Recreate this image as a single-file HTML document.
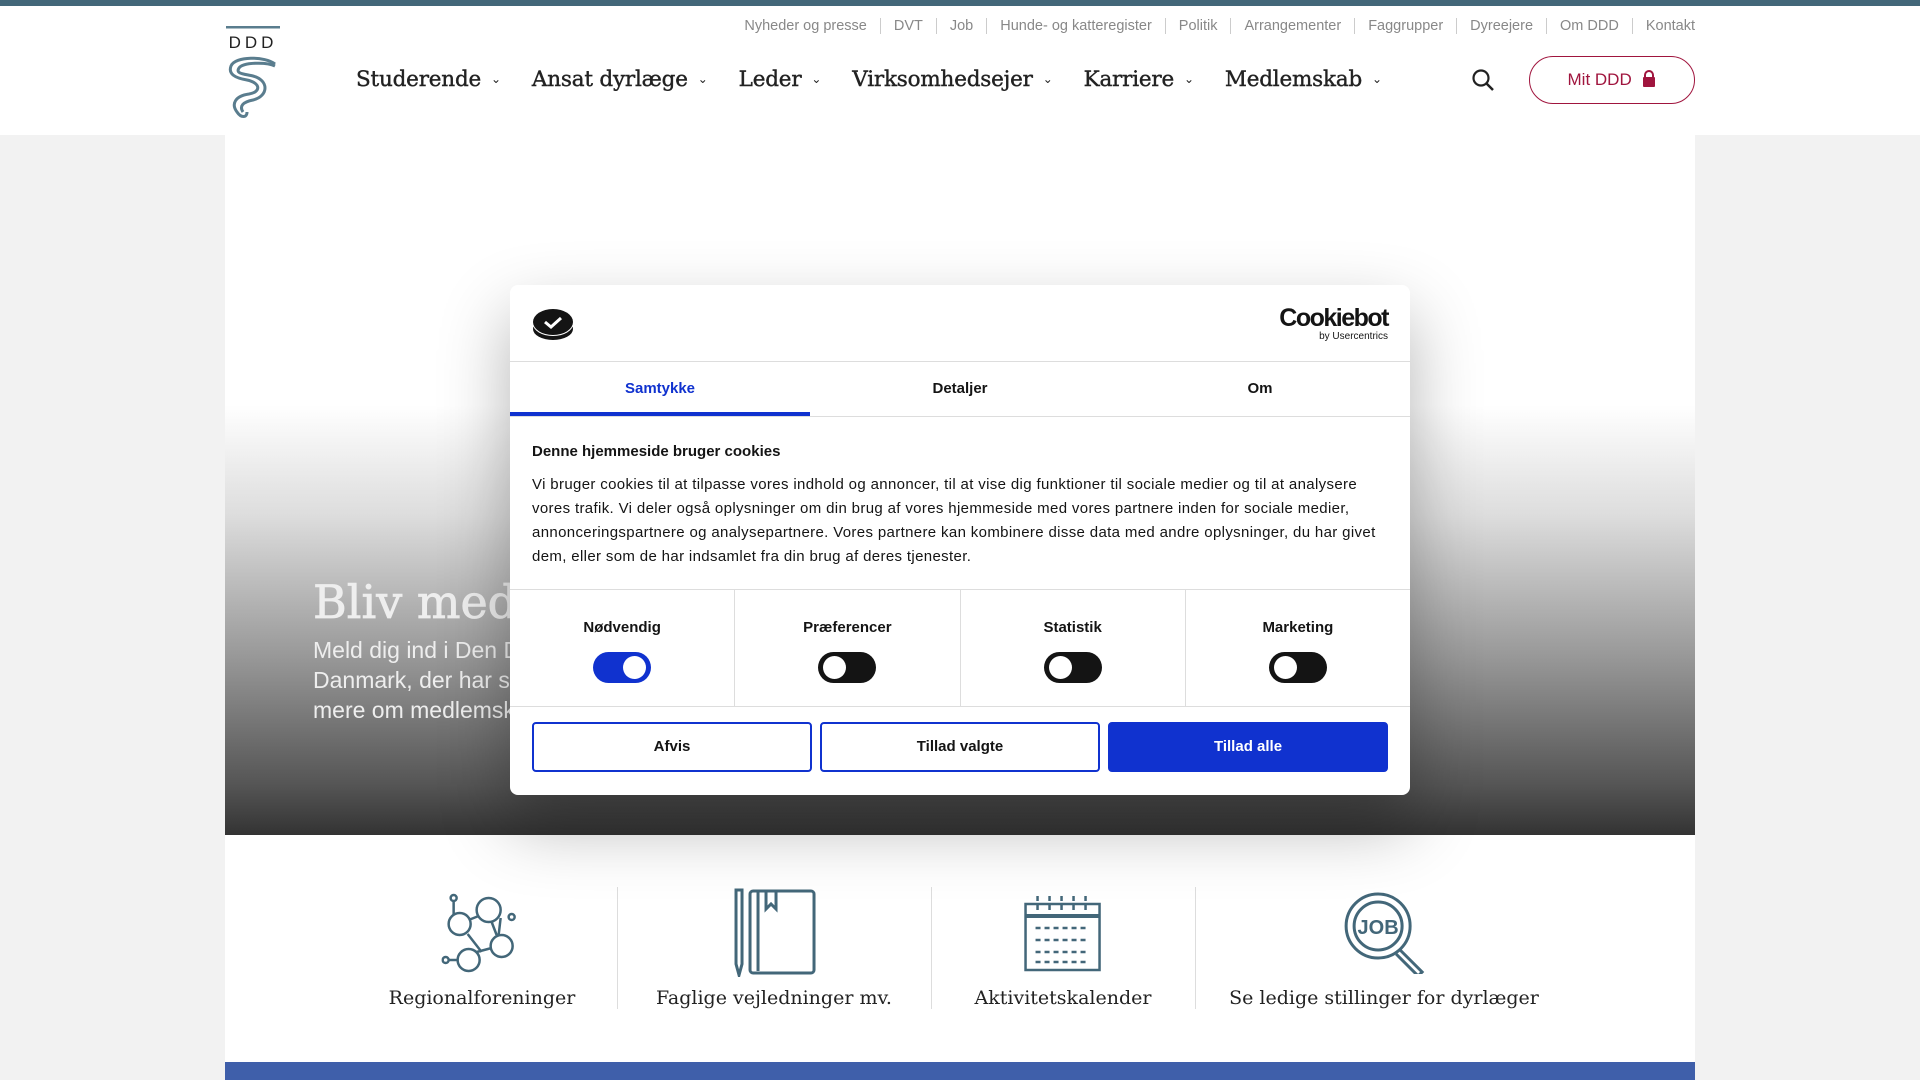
<!DOCTYPE html>
<html><head><meta charset="utf-8"><style>
*{box-sizing:border-box;margin:0;padding:0}
body{width:1920px;height:1080px;overflow:hidden;background:#f2f2f2;font-family:"Liberation Sans",sans-serif;position:relative}
.topbar{position:absolute;left:0;top:0;width:1920px;height:6px;background:#436779}
header{position:absolute;left:0;top:6px;width:1920px;height:129px;background:#fff}
.util{position:absolute;top:12px;right:225px;font-size:14.5px;color:#888;display:flex}
.util span{padding:0 13px;border-left:1px solid #ccc;line-height:16px}
.util span:first-child{border:none}
.util span:last-child{padding-right:0}
.nav{position:absolute;top:61px;left:356px;font-family:"DejaVu Serif",serif;font-size:21.5px;color:#222;display:flex;letter-spacing:-.2px}
.nav span{margin-right:31px;white-space:nowrap;-webkit-text-stroke:.4px #222}
.nav span i{font-style:normal;font-size:12px;margin-left:10px;vertical-align:3px;font-family:"DejaVu Sans";-webkit-text-stroke:0}
.btn{position:absolute;left:1529px;top:50px;width:166px;height:48px;border:1px solid #a0153e;border-radius:24px;color:#a0153e;font-size:17px;text-align:center;line-height:46px}
.hero{position:absolute;left:225px;top:135px;width:1470px;height:700px;background:linear-gradient(#fff 0,#fff 270px,#ddd 380px,#999 520px,#555 650px,#333 700px)}
.h1{position:absolute;left:88px;top:440px;font-family:"DejaVu Serif",serif;font-size:46px;color:#eee;-webkit-text-stroke:.8px #eee}
.hp{position:absolute;left:88px;top:500px;font-size:23px;line-height:30px;color:#eee}
.icons{position:absolute;left:225px;top:835px;width:1470px;height:227px;background:#fff}
.sep{position:absolute;top:52px;width:1px;height:122px;background:#ddd}
.it{position:absolute;top:52px;text-align:center;font-family:"DejaVu Serif",serif;font-size:19px;color:#222;transform:translateX(-50%);white-space:nowrap}
.it .ic{height:90px;display:flex;align-items:center;justify-content:center;margin-bottom:10px}
.blue{position:absolute;left:225px;top:1062px;width:1470px;height:18px;background:#3f5faa}
.modal{position:absolute;left:510px;top:285px;width:900px;height:510px;background:#fff;border-radius:8px;box-shadow:0 30px 70px rgba(0,0,0,.3)}
.mh{height:77px;border-bottom:1px solid #ddd;position:relative}
.tabs{height:55px;border-bottom:1px solid #ddd;display:flex;position:relative}
.tabs div{flex:1;text-align:center;font-weight:bold;font-size:15px;line-height:54px;color:#141414}
.tabs div.a{color:#1032cf;border-bottom:4px solid #1032cf}
.mb{padding:26px 22px 0 22px;height:173px;border-bottom:1px solid #ddd;color:#141414}
.mb h3{font-size:15px;margin-bottom:13px}
.mb p{font-size:15px;line-height:24px;letter-spacing:.35px}
.tg{display:flex;height:117px;border-bottom:1px solid #ddd}
.tg div{flex:1;border-left:1px solid #ddd;text-align:center;font-weight:bold;font-size:15px;padding-top:29px;color:#141414}
.tg div:first-child{border:none}
.sw{width:58px;height:31px;border-radius:16px;background:#141414;margin:16px auto 0;position:relative}
.sw:after{content:"";position:absolute;left:5px;top:4px;width:23px;height:23px;border-radius:50%;background:#fff}
.sw.on{background:#1032cf}.sw.on:after{left:30px}
.bt{position:absolute;top:437px;width:280px;height:50px;border:2px solid #1032cf;border-radius:4px;text-align:center;line-height:46px;font-weight:bold;font-size:15px;color:#141414}
</style></head><body>
<div class="topbar"></div>
<header>
<svg style="position:absolute;left:225px;top:20px" width="56" height="96" viewBox="0 0 56 96"><rect x="1" y="0" width="54" height="2.5" fill="#5a7d8e"/><text x="28" y="22" text-anchor="middle" font-family="Liberation Sans" font-size="17" letter-spacing="4" fill="#222">DDD</text><path d="M50 38 C40 30 10 30 6 40 C3 48 10 52 22 54 C36 57 36 66 24 68 C10 70 6 78 12 86 C16 92 22 92 22 86 M50 40 C42 36 18 36 14 42 C10 48 20 48 28 50 C44 54 44 70 28 74 C18 76 14 80 18 86" fill="none" stroke="#5a7d8e" stroke-width="3"/></svg>
<div class="util"><span>Nyheder og presse</span><span>DVT</span><span>Job</span><span>Hunde- og katteregister</span><span>Politik</span><span>Arrangementer</span><span>Faggrupper</span><span>Dyreejere</span><span>Om DDD</span><span>Kontakt</span></div>
<div class="nav"><span>Studerende<i>⌄</i></span><span>Ansat dyrlæge<i>⌄</i></span><span>Leder<i>⌄</i></span><span>Virksomhedsejer<i>⌄</i></span><span>Karriere<i>⌄</i></span><span>Medlemskab<i>⌄</i></span></div>
<svg style="position:absolute;left:1471px;top:62px" width="24" height="24" viewBox="0 0 24 24"><circle cx="10" cy="10" r="7.5" fill="none" stroke="#222" stroke-width="2.2"/><path d="M15.5 15.5 L22 22" stroke="#222" stroke-width="2.5"/></svg>
<div class="btn">Mit DDD <svg width="14" height="17" viewBox="0 0 14 17" style="vertical-align:-2px;margin-left:6px"><path d="M3 8V5a4 4 0 0 1 8 0v3" fill="none" stroke="#a0153e" stroke-width="2"/><rect x="1" y="7" width="12" height="10" rx="1" fill="#a0153e"/></svg></div>
</header>
<div class="hero"><div class="h1">Bliv medlem</div><div class="hp">Meld dig ind i Den Danske Dyrlægeforening<br>Danmark, der har seks tusinde medlemmer. Læs<br>mere om medlemskab</div></div>
<div class="icons">
<div class="sep" style="left:392px"></div><div class="sep" style="left:706px"></div><div class="sep" style="left:970px"></div>
<div class="it" style="left:257px"><div class="ic"><svg width="80" height="85" viewBox="0 0 80 85" fill="none" stroke="#436779" stroke-width="2.5"><circle cx="47" cy="20" r="12"/><circle cx="18" cy="34" r="11"/><circle cx="60" cy="56" r="11"/><circle cx="27" cy="70" r="11"/><circle cx="12" cy="8" r="3"/><circle cx="70" cy="27" r="3"/><circle cx="4" cy="70" r="3"/><path d="M12 11V24M37 26L27 30M59 28L57 45M50 32L55 45M35 62L50 58M7 70H16M26 44L40 62"/></svg></div>Regionalforeninger</div>
<div class="it" style="left:549px"><div class="ic"><svg width="84" height="90" viewBox="0 0 84 90" fill="none" stroke="#436779" stroke-width="3"><path d="M4 3h6v74l-3 11-3-11z"/><rect x="18" y="4" width="64" height="82" rx="3"/><path d="M26 4v80M34 4v18l5-5 5 5V4"/></svg></div>Faglige vejledninger mv.</div>
<div class="it" style="left:838px"><div class="ic"><svg width="78" height="80" viewBox="0 0 78 80" fill="none" stroke="#436779" stroke-width="2.5"><rect x="2" y="12" width="74" height="66"/><path d="M2 24H76" stroke-width="4"/><path d="M14 4v14M26 4v14M38 4v14M50 4v14M62 4v14M12 36h54M12 48h54M12 60h54M12 70h54" stroke-dasharray="5 4"/></svg></div>Aktivitetskalender</div>
<div class="it" style="left:1159px"><div class="ic"><svg width="84" height="84" viewBox="0 0 84 84" fill="none" stroke="#436779" stroke-width="3"><circle cx="36" cy="36" r="32"/><circle cx="36" cy="36" r="24"/><path d="M58 60l22 22-4 4-22-22"/><text x="36" y="44" text-anchor="middle" font-family="Liberation Sans" font-weight="bold" font-size="20" fill="#436779" stroke="none">JOB</text></svg></div>Se ledige stillinger for dyrlæger</div>
</div>
<div class="blue"></div>
<div class="modal">
<div class="mh"><svg style="position:absolute;left:22px;top:22px" width="42" height="34" viewBox="0 0 42 34"><ellipse cx="21" cy="22" rx="20" ry="11" fill="#141414"/><ellipse cx="21" cy="17" rx="20" ry="12" fill="#fff"/><ellipse cx="21" cy="15" rx="20" ry="13" fill="#141414"/><path d="M13 15l6 5 10-9" stroke="#fff" stroke-width="3" fill="none"/></svg>
<div style="position:absolute;right:22px;top:20px;text-align:right;color:#141414"><div style="font-size:25px;font-weight:bold;letter-spacing:-1.5px;line-height:26px">Cookiebot</div><div style="font-size:10px">by Usercentrics</div></div></div>
<div class="tabs"><div class="a">Samtykke</div><div>Detaljer</div><div>Om</div></div>
<div class="mb"><h3>Denne hjemmeside bruger cookies</h3><p>Vi bruger cookies til at tilpasse vores indhold og annoncer, til at vise dig funktioner til sociale medier og til at analysere vores trafik. Vi deler også oplysninger om din brug af vores hjemmeside med vores partnere inden for sociale medier, annonceringspartnere og analysepartnere. Vores partnere kan kombinere disse data med andre oplysninger, du har givet dem, eller som de har indsamlet fra din brug af deres tjenester.</p></div>
<div class="tg"><div>Nødvendig<div class="sw on"></div></div><div>Præferencer<div class="sw"></div></div><div>Statistik<div class="sw"></div></div><div>Marketing<div class="sw"></div></div></div>
<div class="bt" style="left:22px">Afvis</div><div class="bt" style="left:310px">Tillad valgte</div><div class="bt" style="left:598px;background:#1032cf;color:#fff">Tillad alle</div>
</div>
</body></html>
